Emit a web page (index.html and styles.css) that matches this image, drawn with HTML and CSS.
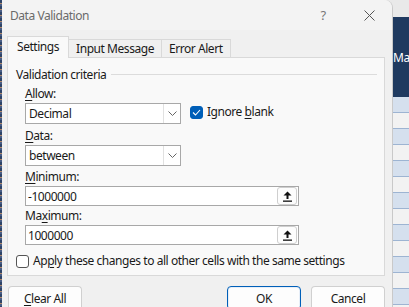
FILE: index.html
```html
<!DOCTYPE html>
<html lang="en">
<head>
  <meta charset="UTF-8" />
  <meta name="viewport" content="width=device-width, initial-scale=1.0" />
  <title>Data Validation</title>
  <link rel="stylesheet" href="styles.css">
</head>
<body>

  <div class="screen">
    <div class="edge"></div>

    <div class="dialog">
      <!-- Title bar -->
      <div class="titlebar">
        <span class="title">Data Validation</span>
        <span class="tb-btn">?</span>
        <span class="tb-btn">
          <svg width="11" height="11" viewBox="0 0 11 11"><path d="M0.5 0.5 L10.5 10.5 M10.5 0.5 L0.5 10.5" stroke="#555" stroke-width="1" fill="none"/></svg>
        </span>
      </div>

      <div class="body">
        <!-- Tabs -->
        <div class="tabs">
          <div class="tab active">Settings</div>
          <div class="tab">Input Message</div>
          <div class="tab">Error Alert</div>
        </div>

        <div class="panel">
          <div class="group-title">
            <span>Validation criteria</span>
            <span class="rule"></span>
          </div>

          <div class="group">
            <div class="label"><u>A</u>llow:</div>
            <div class="row">
              <div class="select">
                <span class="value">Decimal</span>
                <span class="drop">
                  <svg width="9" height="5" viewBox="0 0 9 5"><path d="M0.5 0.5 L4.5 4.5 L8.5 0.5" stroke="#666" fill="none"/></svg>
                </span>
              </div>
              <div class="check">
                <span class="box checked">
                  <svg width="9" height="7" viewBox="0 0 9 7"><path d="M1 3.5 L3.5 6 L8 1" stroke="#fff" stroke-width="1.1" fill="none"/></svg>
                </span>
                <span>Ignore <u>b</u>lank</span>
              </div>
            </div>

            <div class="label"><u>D</u>ata:</div>
            <div class="select">
              <span class="value">between</span>
              <span class="drop">
                <svg width="9" height="5" viewBox="0 0 9 5"><path d="M0.5 0.5 L4.5 4.5 L8.5 0.5" stroke="#666" fill="none"/></svg>
              </span>
            </div>

            <div class="label label-min"><u>M</u>inimum:</div>
            <div class="field">
              <span class="value">-1000000</span>
              <span class="pick">
                <svg width="9" height="11" viewBox="0 0 9 11"><path d="M4.5 0.5 L8.5 4.5 H5.5 V8 H3.5 V4.5 H0.5 Z" fill="#111"/><rect x="0" y="9.5" width="9" height="1.3" fill="#111"/></svg>
              </span>
            </div>

            <div class="label label-max">Ma<u>x</u>imum:</div>
            <div class="field">
              <span class="value">1000000</span>
              <span class="pick">
                <svg width="9" height="11" viewBox="0 0 9 11"><path d="M4.5 0.5 L8.5 4.5 H5.5 V8 H3.5 V4.5 H0.5 Z" fill="#111"/><rect x="0" y="9.5" width="9" height="1.3" fill="#111"/></svg>
              </span>
            </div>
          </div>

          <div class="check apply">
            <span class="box"></span>
            <span>Ap<u>p</u>ly these changes to all other cells with the same settings</span>
          </div>
        </div>

        <!-- Buttons -->
        <div class="buttons">
          <button><u>C</u>lear All</button>
          <span class="spacer"></span>
          <button class="default">OK</button>
          <button>Cancel</button>
        </div>
      </div>
    </div>

    <!-- Worksheet behind the dialog -->
    <div class="sheet">
      <div class="sheet-top"></div>
      <div class="sheet-head">Max</div>
      <div class="sheet-row blue"></div>
      <div class="sheet-row"></div>
      <div class="sheet-row blue"></div>
      <div class="sheet-row"></div>
      <div class="sheet-row blue"></div>
      <div class="sheet-row"></div>
      <div class="sheet-row blue"></div>
      <div class="sheet-row"></div>
      <div class="sheet-row blue"></div>
      <div class="sheet-row"></div>
      <div class="sheet-row blue"></div>
      <div class="sheet-row"></div>
      <div class="sheet-row blue"></div>
    </div>
  </div>

</body>
</html>
```

FILE: styles.css
```css
* {
  margin: 0;
  padding: 0;
  box-sizing: border-box;
}

body {
  font-family: "Noto Sans", Arial, sans-serif;
  font-size: 12px;
  letter-spacing: -0.45px;
  color: #1a1a1a;
  width: 409px;
  height: 307px;
  overflow: hidden;
  background-color: #e9e9e9;
}

u {
  text-decoration-thickness: 1px;
  text-underline-offset: 2px;
}

.screen {
  display: flex;
  height: 307px;
}

.edge {
  width: 2px;
  flex-shrink: 0;
  background: repeating-linear-gradient(#2e4468 0 3px, #b48a6a 3px 4px, #4a5e86 4px 6px);
}

.dialog {
  width: 391px;
  flex-shrink: 0;
  background-color: #f0f0f0;
  border-right: 1px solid #c9c9c9;
  border-top-right-radius: 8px;
  display: flex;
  flex-direction: column;
}

.titlebar {
  height: 30px;
  display: flex;
  align-items: center;
  background-color: #f3f3f3;
  border-top-right-radius: 8px;
}

.title {
  flex: 1;
  padding-left: 8px;
  color: #6a6a6a;
}

.tb-btn {
  width: 46px;
  height: 30px;
  display: flex;
  align-items: center;
  justify-content: center;
  color: #777;
  font-size: 13px;
}

.body {
  padding: 6px 7px 0 5px;
}

/* Tabs */
.tabs {
  display: flex;
  align-items: flex-end;
  height: 21px;
}

.tab {
  height: 18px;
  line-height: 17px;
  padding: 0 7px;
  border: 1px solid #d9d9d9;
  border-bottom: none;
  background-color: #f0f0f0;
  margin-left: -1px;
}

.tab.active {
  height: 22px;
  line-height: 20px;
  padding: 0 9px;
  margin-left: 0;
  margin-bottom: -1px;
  background-color: #f9f9f9;
  position: relative;
  z-index: 1;
}

.panel {
  height: 219px;
  border: 1px solid #d9d9d9;
  background-color: #f9f9f9;
  padding: 8px 7px 0 8px;
}

.group-title {
  display: flex;
  align-items: center;
  height: 16px;
  gap: 5px;
}

.group-title .rule {
  flex: 1;
  height: 1px;
  background-color: #dcdcdc;
}

.group {
  padding-left: 9px;
}

.label {
  height: 16px;
  line-height: 16px;
  margin-top: 4px;
  margin-bottom: 1px;
}

.label-min {
  margin-top: 3px;
}

.label-max {
  margin-top: 2px;
}

.row {
  display: flex;
  align-items: flex-start;
  gap: 9px;
}

.select {
  width: 156px;
  height: 21px;
  display: flex;
  align-items: center;
  background-color: #fff;
  border: 1px solid #a8a8a8;
}

.value {
  flex: 1;
  padding-left: 3px;
}

.drop {
  width: 17px;
  height: 19px;
  display: flex;
  align-items: center;
  justify-content: center;
  border-left: 1px solid #e1e1e1;
}

.field {
  width: 274px;
  height: 20px;
  display: flex;
  align-items: center;
  background-color: #fff;
  border: 1px solid #a8a8a8;
  padding-right: 1px;
}

.field .value {
  padding-left: 2px;
}

.pick {
  width: 20px;
  height: 18px;
  display: flex;
  align-items: center;
  justify-content: center;
  background-color: #fdfdfd;
  border: 1px solid #cfcfcf;
  border-radius: 3px;
}

.check {
  display: flex;
  align-items: center;
  gap: 4px;
  height: 16px;
  line-height: 16px;
  margin-top: 1px;
  white-space: nowrap;
}

.box {
  width: 13px;
  height: 13px;
  flex-shrink: 0;
  border: 1px solid #555;
  border-radius: 3px;
  background-color: #fff;
  display: flex;
  align-items: center;
  justify-content: center;
}

.box.checked {
  background-color: #005fb8;
  border-color: #005fb8;
}

.apply {
  margin-top: 8px;
}

/* Buttons */
.buttons {
  display: flex;
  gap: 10px;
  margin-top: 10px;
  padding-left: 1px;
}

.buttons .spacer {
  flex: 1;
}

.buttons button {
  width: 74px;
  height: 24px;
  font-family: inherit;
  font-size: 12px;
  letter-spacing: -0.45px;
  color: #1a1a1a;
  background-color: #fdfdfd;
  border: 1px solid #d0d0d0;
  border-bottom-color: #b8b8b8;
  border-radius: 4px;
}

.buttons button.default {
  border: 1px solid #005fb8;
  box-shadow: inset 0 0 0 1px #e6eef8;
}

/* Worksheet */
.sheet {
  flex: 1;
  min-width: 0;
  overflow: hidden;
  background-color: #f2f2f2;
}

.sheet-top {
  height: 17px;
  background-color: #e9e9e9;
}

.sheet-head {
  height: 80px;
  background-color: #1f3a60;
  color: #fff;
  line-height: 82px;
  white-space: nowrap;
  overflow: hidden;
}

.sheet-row {
  height: 16px;
  border-bottom: 1px solid #9db4d2;
  background-color: #f2f2f2;
}

.sheet-row.blue {
  background-color: #d5e0ee;
}
```
